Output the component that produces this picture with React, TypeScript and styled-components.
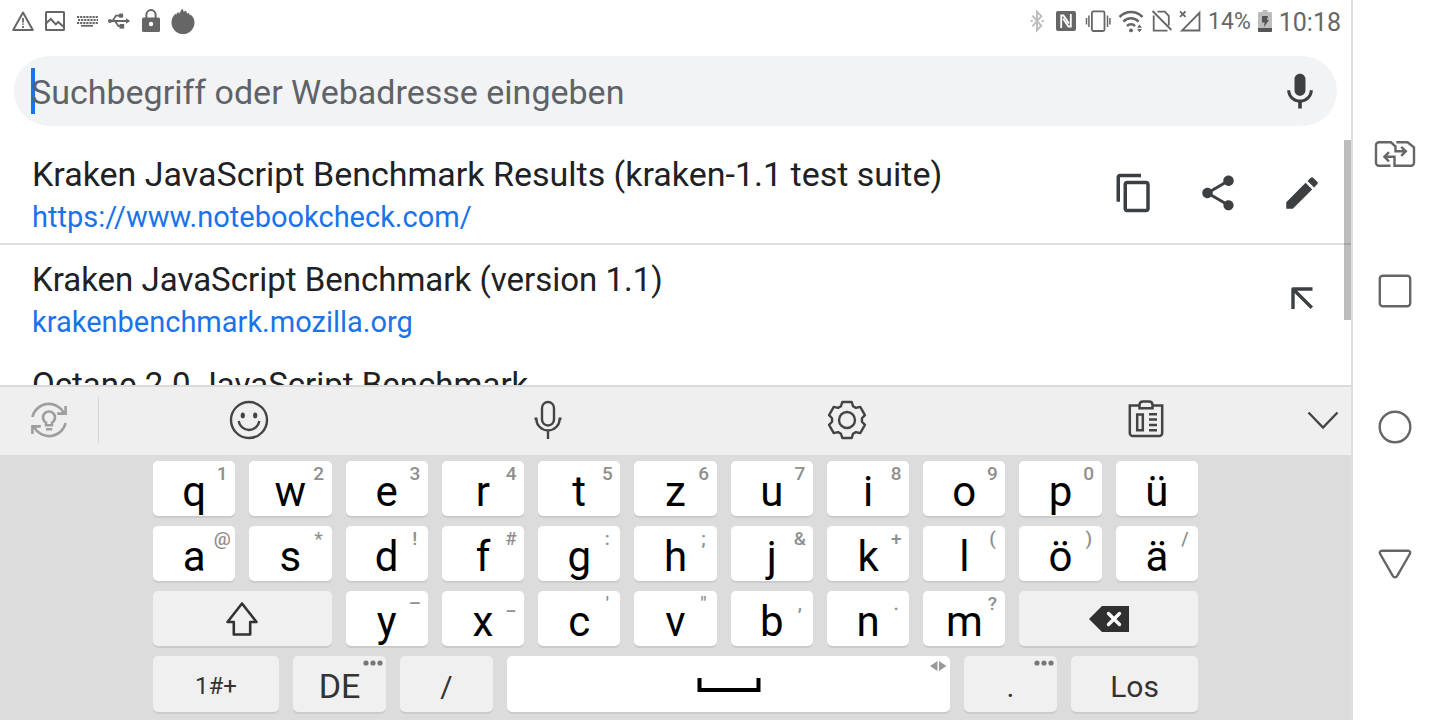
import React from 'react';
import styled, { createGlobalStyle } from 'styled-components';

const GlobalStyle = createGlobalStyle`
  *, *::before, *::after { box-sizing: border-box; }
  html, body { margin: 0; padding: 0; background: #fff; }
  body { font-family: Roboto, "Noto Sans", sans-serif; color: #202124; }
  button, input { font: inherit; color: inherit; }
`;

/* ---------- shell ---------- */

const Screen = styled.div`
  display: flex;
  height: 100vh;
  overflow: hidden;
`;

const Main = styled.main`
  flex: 1;
  min-width: 0;
  display: flex;
  flex-direction: column;
`;

const IconButton = styled.button`
  display: flex;
  align-items: center;
  justify-content: center;
  padding: 0;
  border: 0;
  background: none;
  cursor: pointer;
`;

/* ---------- status bar ---------- */

const StatusBar = styled.header`
  display: flex;
  align-items: center;
  justify-content: space-between;
  height: 42px;
  padding: 0 10px 0 11px;
  color: #666;
`;

const StatusGroup = styled.div<{ $gap?: number }>`
  display: flex;
  align-items: center;
  gap: ${(p) => p.$gap || 8}px;
`;

const StatusSvg = styled.svg`
  display: block;
  height: 24px;
  overflow: visible;
`;

const Percent = styled.span`
  padding-top: 2px;
  font-size: 23px;
  line-height: 26px;
`;

const Clock = styled.time`
  padding-top: 4px;
  font-size: 25px;
  line-height: 26px;
`;

/* ---------- search ---------- */

const SearchBar = styled.form`
  position: relative;
  display: flex;
  align-items: center;
  height: 70px;
  margin: 14px 14px 0;
  padding: 0 15px 0 17px;
  border-radius: 35px;
  background: #f1f3f4;
`;

const Caret = styled.span`
  position: absolute;
  left: 17px;
  top: 12px;
  width: 4px;
  height: 46px;
  background: #1a73e8;
`;

const SearchInput = styled.input`
  position: relative;
  flex: 1;
  min-width: 0;
  height: 46px;
  padding: 2px 0 0;
  border: 0;
  outline: 0;
  background: transparent;
  font-size: 34px;
  &::placeholder {
    color: #5f6368;
    opacity: 1;
  }
`;

const VoiceButton = styled(IconButton)`
  width: 44px;
  height: 46px;
  padding-top: 2px;
  color: #3c4043;
`;

/* ---------- suggestions ---------- */

const SuggestionArea = styled.section`
  position: relative;
  flex: 1;
  min-height: 0;
  margin-top: 14px;
  overflow: hidden;
`;

const SuggestionList = styled.ul`
  margin: 0;
  padding: 0;
  list-style: none;
`;

const Suggestion = styled.li<{ $divided?: boolean }>`
  display: flex;
  align-items: center;
  height: 105px;
  padding: 0 7px 0 32px;
  border-bottom: ${(p) => (p.$divided ? '2px solid #dfdfdf' : '0')};
`;

const SuggestionText = styled.div`
  flex: 1;
  min-width: 0;
  align-self: flex-start;
  padding-top: 14px;
  white-space: nowrap;
`;

const SuggestionTitle = styled.div<{ $large?: boolean }>`
  padding-bottom: ${(p) => (p.$large ? 2 : 0)}px;
  font-size: ${(p) => (p.$large ? 34 : 33)}px;
  line-height: ${(p) => (p.$large ? 40 : 42)}px;
`;

const SuggestionLink = styled.a`
  display: block;
  font-size: 29px;
  line-height: 42px;
  color: #1a73e8;
  text-decoration: none;
`;

const SuggestionAction = styled(IconButton)`
  width: 84px;
  height: 84px;
  padding-top: 2px;
  color: #3c4043;
`;

const ScrollThumb = styled.div`
  position: absolute;
  top: 0;
  right: 0;
  width: 7px;
  height: 180px;
  background: rgba(0, 0, 0, 0.26);
`;

/* ---------- keyboard ---------- */

const Keyboard = styled.section`
  border-top: 2px solid #dadada;
  background: #dcdcdc;
`;

const Toolbar = styled.div`
  display: flex;
  align-items: center;
  height: 68px;
  padding-bottom: 2px;
  background: #efefef;
  color: #444;
`;

const SuggestTool = styled(IconButton)`
  width: 99px;
  height: 46px;
  border-right: 1px solid #d4d4d4;
  color: #9e9e9e;
`;

const Tool = styled(IconButton)`
  flex: 1;
  height: 66px;
`;

const HideTool = styled(IconButton)`
  width: 56px;
  height: 66px;
`;

const KeyArea = styled.div`
  display: flex;
  flex-direction: column;
  gap: 10px;
  padding: 6px 153px 8px;
`;

const KeyRow = styled.div<{ $columns?: string }>`
  display: grid;
  grid-template-columns: ${(p) => p.$columns || 'repeat(11, minmax(0, 1fr))'};
  gap: 14px;
`;

const Key = styled.button<{ $special?: boolean; $wide?: boolean; $size?: number }>`
  position: relative;
  display: flex;
  align-items: center;
  justify-content: center;
  grid-column: span ${(p) => (p.$wide ? 2 : 1)};
  height: 55px;
  padding: ${(p) => (p.$special ? 0 : 6)}px 0 0;
  border: 0;
  border-radius: 5px;
  background: ${(p) => (p.$special ? '#f0f0f0' : '#fff')};
  box-shadow: 0 2px 0 #cbcbcb;
  color: ${(p) => (p.$special ? '#333' : '#000')};
  font-size: ${(p) => p.$size || 42}px;
  line-height: 49px;
  cursor: pointer;
`;

const BottomKey = styled(Key)`
  height: 56px;
  padding-top: 5px;
`;

const SpaceKey = styled(Key)`
  height: 56px;
  padding-top: 2px;
`;

const Hint = styled.span`
  position: absolute;
  top: 1px;
  right: 0;
  width: 26px;
  font-size: 19px;
  font-weight: 500;
  line-height: 23px;
  text-align: center;
  color: #8f8f8f;
`;

const CornerMark = styled.svg`
  position: absolute;
  top: 4px;
  right: 3px;
`;

/* ---------- system navigation ---------- */

const SystemNav = styled.nav`
  display: flex;
  flex-direction: column;
  width: 89px;
  padding: 86px 3px 88px 0;
  border-left: 2px solid #dfdfdf;
  color: #666;
`;

const NavButton = styled(IconButton)`
  flex: 1;
`;

/* ---------- icons ---------- */

const stroke = (width: number) => ({
  fill: 'none',
  stroke: 'currentColor',
  strokeWidth: width,
});

const LeftStatusIcons = () => (
  <StatusGroup>
    <StatusSvg width="24" viewBox="0 0 24 24" aria-hidden="true">
      <path d="M12 3.6 21.8 21H2.2Z" {...stroke(2)} strokeLinejoin="round" />
      <path d="M12 9v4.4M12 14.4v1.4M12 17v2" {...stroke(1.8)} />
    </StatusSvg>
    <StatusSvg width="24" viewBox="0 0 24 24" aria-hidden="true">
      <rect x="3" y="3" width="18" height="18" rx="0.6" {...stroke(2)} />
      <path d="M3 14.4 7.8 10l5 5.4 2.4-2.4 5.6 5" {...stroke(2)} />
    </StatusSvg>
    <StatusSvg width="24" viewBox="0 0 24 24" aria-hidden="true">
      <path d="M2 8H23M2 14H23" {...stroke(2.2)} strokeDasharray="2.2 0.9" />
      <path d="M3 11H23" {...stroke(2.2)} strokeDasharray="2.2 0.9" />
      <path d="M6 16.8H18" {...stroke(1.8)} />
    </StatusSvg>
    <StatusSvg width="24" viewBox="0 0 24 24" aria-hidden="true">
      <circle cx="3" cy="12" r="2" fill="currentColor" />
      <path d="M3 12H20M5.5 12 9 6.6h4M8 12l3.4 5.2H14" {...stroke(1.8)} />
      <path d="M19 9.2 23.2 12 19 14.8Z" fill="currentColor" />
      <rect x="11.8" y="4.4" width="4.4" height="4.4" rx="1.4" fill="currentColor" />
      <rect x="12.6" y="15" width="4.6" height="4.6" fill="currentColor" />
    </StatusSvg>
    <StatusSvg width="24" viewBox="0 0 24 24" aria-hidden="true">
      <path d="M7.4 9.5V5.6a4.6 4.6 0 0 1 9.2 0V9.5" {...stroke(2)} />
      <rect x="3" y="8.5" width="18" height="14.5" rx="1.5" fill="currentColor" />
      <circle cx="12" cy="15" r="2.2" fill="#fff" />
    </StatusSvg>
    <StatusSvg width="24" viewBox="0 0 24 24" aria-hidden="true">
      <path
        d="M.5 13.6C.5 10 2 7 4.6 4.600l.4 1.600C5.500 4.600 6.300 3.800 7.200 3l.9 1.700C9 3 10.200 1.800 11-.4c1 1 1.600 2.200 1.900 3.400L14.200 1.400c1.200 1 1.800 2.200 2.100 3.400l1.100-1c.9.8 1.400 1.700 1.600 2.600l.9-.6c2.300 2 3.600 4.700 3.600 7.800a11.500 11.500 0 0 1-23 0Z"
        fill="currentColor"
      />
    </StatusSvg>
  </StatusGroup>
);

const ConnectionIcons = () => (
  <StatusGroup>
    <StatusSvg width="16" viewBox="0 0 16 24" color="#bdbdbd" aria-hidden="true">
      <path d="M2.4 6.6 11.3 16.700 7 21.300V2.600l4.300 4.600L2.400 17.400" {...stroke(1.9)} />
      <path d="M.6 12h2.200M11.600 12h2.200" {...stroke(2)} />
    </StatusSvg>
    <StatusSvg width="24" viewBox="0 0 24 24" aria-hidden="true">
      <rect x="2" y="2" width="20" height="20" rx="2" fill="currentColor" />
      <path d="M7.200 19V6.500H9.500L15 14.500M16.800 5V17.500H14.500L9 9.500" fill="none" stroke="#fff" strokeWidth="1.800" />
    </StatusSvg>
    <StatusSvg width="24" viewBox="0 0 24 24" aria-hidden="true">
      <rect x="5.900" y="2.400" width="12.600" height="19.600" rx="1.500" {...stroke(1.8)} />
      <path d="M2.900 6.500v11.500M21.500 6.500v11.500M.5 9v6.500M23.900 9v6.500" {...stroke(1.5)} />
    </StatusSvg>
    <StatusSvg width="26" viewBox="0 0 26 24" aria-hidden="true">
      <path d="M1.500 8C8 1.400 18 1.400 24.500 8M5.400 12.600c4.200-4.400 11-4.400 15.200 0M9 17.200c2.200-2.500 5.800-2.500 8 0" {...stroke(2.5)} />
      <circle cx="13" cy="21.400" r="1.900" fill="currentColor" />
      <path d="M19 18.800 21.500 15.600 24 18.800ZM19 20 21.500 23.200 24 20Z" fill="currentColor" />
    </StatusSvg>
    <StatusSvg width="20" viewBox="0 0 20 24" aria-hidden="true">
      <path d="M1.700 6.500V21.600H15.500M5.500 2.700h7.300l4 4.200V16.500M.5 2 19.400 21" {...stroke(1.8)} />
    </StatusSvg>
    <StatusSvg width="20" viewBox="0 0 20 24" aria-hidden="true">
      <path d="M2 21.500H19.500V3.800ZM0 2.300l5.600 5.600M5.600 2.300 0 7.900" {...stroke(1.8)} />
    </StatusSvg>
  </StatusGroup>
);

const BatteryIcon = () => (
  <StatusSvg width="14" viewBox="0 0 14 24" aria-hidden="true">
    <path d="M4.500 1h5v2H13a1 1 0 0 1 1 1v15H0V4a1 1 0 0 1 1-1h3.500Z" fill="#bdbdbd" />
    <path d="M0 19h14v3a1 1 0 0 1-1 1H1a1 1 0 0 1-1-1Z" fill="#555" />
    <path d="M4 7h6L9 11h2L6 18l.6-4.500H4Z" fill="#555" />
  </StatusSvg>
);

const MicFilledIcon = () => (
  <svg width="44" height="44" viewBox="0 0 24 24" fill="currentColor" aria-hidden="true">
    <path d="M12 14c1.660 0 2.990-1.340 2.990-3L15 5c0-1.660-1.340-3-3-3S9 3.340 9 5v6c0 1.660 1.340 3 3 3zm5.300-3c0 3-2.540 5.100-5.300 5.100S6.700 14 6.700 11H5c0 3.410 2.720 6.230 6 6.720V21h2v-3.280c3.280-.48 6-3.300 6-6.720h-1.700z" />
  </svg>
);

const CopyIcon = () => (
  <svg width="42" height="42" viewBox="0 0 24 24" fill="currentColor" aria-hidden="true">
    <path d="M16 1H4c-1.100 0-2 .9-2 2v14h2V3h12V1zm3 4H8c-1.100 0-2 .9-2 2v14c0 1.100.9 2 2 2h11c1.100 0 2-.9 2-2V7c0-1.100-.9-2-2-2zm0 16H8V7h11v14z" />
  </svg>
);

const ShareIcon = () => (
  <svg width="42" height="42" viewBox="0 0 24 24" fill="currentColor" aria-hidden="true">
    <path d="M18 16.080c-.76 0-1.440.3-1.960.77L8.910 12.700c.05-.23.090-.46.090-.7s-.04-.47-.09-.7l7.050-4.110c.54.5 1.250.81 2.040.81 1.660 0 3-1.340 3-3s-1.340-3-3-3-3 1.340-3 3c0 .24.040.47.090.7L8.040 9.810C7.500 9.310 6.790 9 6 9c-1.660 0-3 1.340-3 3s1.340 3 3 3c.79 0 1.500-.31 2.040-.81l7.120 4.160c-.05.21-.08.43-.08.65 0 1.610 1.310 2.920 2.920 2.920s2.920-1.310 2.920-2.920-1.310-2.920-2.920-2.920z" />
  </svg>
);

const EditIcon = () => (
  <svg width="42" height="42" viewBox="0 0 24 24" fill="currentColor" aria-hidden="true">
    <path d="M3 17.250V21h3.750L17.810 9.940l-3.750-3.750L3 17.250zM20.710 7.040c.39-.39.39-1.020 0-1.410l-2.340-2.340c-.39-.39-1.020-.39-1.410 0l-1.830 1.830 3.750 3.750 1.830-1.830z" />
  </svg>
);

const InsertArrowIcon = () => (
  <svg width="24" height="24" viewBox="0 0 24 24" aria-hidden="true">
    <path d="M3 22V2H22.500M3 2 21.800 20.800" {...stroke(3.4)} strokeLinejoin="round" />
  </svg>
);

const SuggestIcon = () => (
  <svg width="40" height="40" viewBox="0 0 40 40" {...stroke(2.6)} aria-hidden="true">
    <path d="M3.400 17A17 17 0 0 1 35 13M36.600 6v7.600h-8.400" />
    <path d="M36.600 23A17 17 0 0 1 5 27M3.400 34v-7.600h8.400" />
    <path d="M17 25.300h6v-2.600c1.800-1.300 3-3 3-5.200a6 6 0 0 0-12 0c0 2.200 1.200 3.900 3 5.200ZM17 29.200h6.200" />
  </svg>
);

const SmileIcon = () => (
  <svg width="40" height="40" viewBox="0 0 40 40" aria-hidden="true">
    <circle cx="20" cy="20" r="18" {...stroke(2.4)} />
    <ellipse cx="13.800" cy="15.400" rx="2.100" ry="2.900" fill="currentColor" />
    <ellipse cx="26.200" cy="15.400" rx="2.100" ry="2.900" fill="currentColor" />
    <path d="M9.700 21a10.400 10.400 0 0 0 20.600 0" {...stroke(2.4)} />
  </svg>
);

const MicOutlineIcon = () => (
  <svg width="40" height="40" viewBox="0 0 40 40" {...stroke(2.4)} aria-hidden="true">
    <rect x="14" y="2" width="12" height="23.500" rx="6" />
    <path d="M6.500 18.700h3M33.500 18.700h-3M8.300 18.700c0 6.500 5.200 11.700 11.700 11.700s11.700-5.200 11.700-11.700M20 30.400V39" />
  </svg>
);

/* one tooth of the gear, repeated every 60 degrees round the centre */
const tooth = [[-6, -13.8], [-4.7, -18], [4.7, -18], [6, -13.8]];
const gearPoints = [0, 1, 2, 3, 4, 5]
  .flatMap((n) => {
    const a = (n * Math.PI) / 3;
    return tooth.map(
      ([x, y]) =>
        `${(20 + x * Math.cos(a) - y * Math.sin(a)).toFixed(2)},${(20 + x * Math.sin(a) + y * Math.cos(a)).toFixed(2)}`
    );
  })
  .join(' ');

const GearIcon = () => (
  <svg width="40" height="40" viewBox="0 0 40 40" {...stroke(2.4)} aria-hidden="true">
    <polygon points={gearPoints} strokeLinejoin="round" />
    <circle cx="20" cy="20" r="8" />
  </svg>
);

const ClipboardIcon = () => (
  <svg width="40" height="40" viewBox="0 0 40 40" {...stroke(2.5)} aria-hidden="true">
    <path d="M13.500 5.500H3.800V33a3 3 0 0 0 3 3h26.400a3 3 0 0 0 3-3V5.500h-9.700" />
    <path d="M13.500 8.300V5c0-2.200 1.300-3.500 3.500-3.500h6c2.200 0 3.500 1.300 3.500 3.500v3.300Z" />
    <path d="M11.200 14.400h5.600v15.800h-5.600ZM23 14.200h8M23 19.600h8M23 25h8M23 30.300h8" />
  </svg>
);

const ChevronIcon = () => (
  <svg width="32" height="20" viewBox="0 0 32 20" {...stroke(2.4)} aria-hidden="true">
    <path d="M1.500 2.500 16 17.500 30.500 2.500" />
  </svg>
);

const ShiftIcon = () => (
  <svg width="34" height="36" viewBox="0 0 34 36" {...stroke(2.6)} aria-hidden="true">
    <path d="M17 2.500 31.500 21h-6.300v12.500H8.800V21H2.500Z" strokeLinejoin="round" />
  </svg>
);

const BackspaceIcon = () => (
  <svg width="40" height="26" viewBox="0 0 40 26" aria-hidden="true">
    <path d="M0 13 13 0H40V26H13Z" fill="#303030" />
    <path d="M19.500 7.500 30.500 18.500M30.500 7.500 19.500 18.500" fill="none" stroke="#fff" strokeWidth="3.400" strokeLinecap="round" />
  </svg>
);

const SpaceIcon = () => (
  <svg width="64" height="14" viewBox="0 0 64 14" {...stroke(4)} aria-hidden="true">
    <path d="M2.500 0V12H61.500V0" />
  </svg>
);

const MoreMark = () => (
  <CornerMark width="20" height="6" viewBox="0 0 20 6" fill="#777" aria-hidden="true">
    <circle cx="3" cy="3" r="2.600" />
    <circle cx="10" cy="3" r="2.600" />
    <circle cx="17" cy="3" r="2.600" />
  </CornerMark>
);

const MoveMark = () => (
  <CornerMark width="18" height="12" viewBox="0 0 18 12" fill="#999" aria-hidden="true">
    <path d="M8.500 1V11L1 6ZM10 1V11L17.500 6Z" />
  </CornerMark>
);

const SwitchIcon = () => (
  <svg width="42" height="28" viewBox="0 0 42 28" {...stroke(2.4)} aria-hidden="true">
    <path d="M16.500 25.700H5a3 3 0 0 1-3-3V5.300a3 3 0 0 1 3-3h12l4.500 4.200v4.800H31.500M27.200 6.800l4.600 4.500-4.600 4.600" />
    <path d="M22.400 2.300H33.500l6.500 5v15.400a3 3 0 0 1-3 3H20.500V16.700H10.500M15 12.100l-4.600 4.600 4.600 4.600" />
  </svg>
);

const SquareIcon = () => (
  <svg width="34" height="34" viewBox="0 0 34 34" {...stroke(2.4)} aria-hidden="true">
    <rect x="1.800" y="1.800" width="30.400" height="30.400" rx="3" />
  </svg>
);

const CircleIcon = () => (
  <svg width="34" height="34" viewBox="0 0 34 34" {...stroke(2.4)} aria-hidden="true">
    <circle cx="17" cy="17" r="15.300" />
  </svg>
);

const TriangleIcon = () => (
  <svg width="34" height="30" viewBox="0 0 34 30" {...stroke(2.4)} aria-hidden="true">
    <path d="M4 1.800H30c2 0 2.800 1.600 1.800 3.200L19.200 26.800c-1.200 2-3.200 2-4.400 0L2.200 5C1.200 3.400 2 1.800 4 1.800Z" />
  </svg>
);

/* ---------- page ---------- */

type KeyDef = [letter: string, hint?: string];

const topRow: KeyDef[] = [
  ['q', '1'], ['w', '2'], ['e', '3'], ['r', '4'], ['t', '5'], ['z', '6'],
  ['u', '7'], ['i', '8'], ['o', '9'], ['p', '0'], ['ü'],
];
const homeRow: KeyDef[] = [
  ['a', '@'], ['s', '*'], ['d', '!'], ['f', '#'], ['g', ':'], ['h', ';'],
  ['j', '&'], ['k', '+'], ['l', '('], ['ö', ')'], ['ä', '/'],
];
const lowRow: KeyDef[] = [
  ['y', '–'], ['x', '_'], ['c', "'"], ['v', '"'], ['b', ','], ['n', '.'], ['m', '?'],
];

const LetterKeys = ({ keys }: { keys: KeyDef[] }) => (
  <>
    {keys.map(([letter, hint]) => (
      <Key key={letter} type="button">
        {letter}
        {hint && <Hint>{hint}</Hint>}
      </Key>
    ))}
  </>
);

export default function App() {
  return (
    <Screen>
      <GlobalStyle />
      <Main>
        <StatusBar>
          <LeftStatusIcons />
          <StatusGroup>
            <ConnectionIcons />
            <StatusGroup $gap={7}>
              <Percent>14%</Percent>
              <BatteryIcon />
              <Clock>10:18</Clock>
            </StatusGroup>
          </StatusGroup>
        </StatusBar>

        <SearchBar role="search" onSubmit={(e) => e.preventDefault()}>
          <Caret />
          <SearchInput
            type="text"
            aria-label="Suchbegriff oder Webadresse eingeben"
            placeholder="Suchbegriff oder Webadresse eingeben"
          />
          <VoiceButton type="button" aria-label="Sprachsuche"><MicFilledIcon /></VoiceButton>
        </SearchBar>

        <SuggestionArea>
          <SuggestionList>
            <Suggestion $divided>
              <SuggestionText>
                <SuggestionTitle $large>Kraken JavaScript Benchmark Results (kraken-1.1 test suite)</SuggestionTitle>
                <SuggestionLink href="https://www.notebookcheck.com/">https://www.notebookcheck.com/</SuggestionLink>
              </SuggestionText>
              <SuggestionAction type="button" aria-label="Kopieren"><CopyIcon /></SuggestionAction>
              <SuggestionAction type="button" aria-label="Teilen"><ShareIcon /></SuggestionAction>
              <SuggestionAction type="button" aria-label="Bearbeiten"><EditIcon /></SuggestionAction>
            </Suggestion>
            <Suggestion>
              <SuggestionText>
                <SuggestionTitle>Kraken JavaScript Benchmark (version 1.1)</SuggestionTitle>
                <SuggestionLink href="https://krakenbenchmark.mozilla.org">krakenbenchmark.mozilla.org</SuggestionLink>
              </SuggestionText>
              <SuggestionAction type="button" aria-label="Übernehmen"><InsertArrowIcon /></SuggestionAction>
            </Suggestion>
            <Suggestion>
              <SuggestionText>
                <SuggestionTitle>Octane 2.0 JavaScript Benchmark</SuggestionTitle>
              </SuggestionText>
            </Suggestion>
          </SuggestionList>
          <ScrollThumb />
        </SuggestionArea>

        <Keyboard aria-label="Tastatur">
          <Toolbar>
            <SuggestTool type="button" aria-label="Vorschläge"><SuggestIcon /></SuggestTool>
            <Tool type="button" aria-label="Emoji"><SmileIcon /></Tool>
            <Tool type="button" aria-label="Spracheingabe"><MicOutlineIcon /></Tool>
            <Tool type="button" aria-label="Einstellungen"><GearIcon /></Tool>
            <Tool type="button" aria-label="Zwischenablage"><ClipboardIcon /></Tool>
            <HideTool type="button" aria-label="Tastatur ausblenden"><ChevronIcon /></HideTool>
          </Toolbar>
          <KeyArea>
            <KeyRow><LetterKeys keys={topRow} /></KeyRow>
            <KeyRow><LetterKeys keys={homeRow} /></KeyRow>
            <KeyRow>
              <Key type="button" $special $wide aria-label="Umschalt"><ShiftIcon /></Key>
              <LetterKeys keys={lowRow} />
              <Key type="button" $special $wide aria-label="Löschen"><BackspaceIcon /></Key>
            </KeyRow>
            <KeyRow $columns="126fr 93fr 93fr 443fr 93fr 127fr">
              <BottomKey type="button" $special $size={24}>1#+</BottomKey>
              <BottomKey type="button" $special $size={34}>DE<MoreMark /></BottomKey>
              <BottomKey type="button" $special $size={30}>/</BottomKey>
              <SpaceKey type="button" aria-label="Leertaste"><SpaceIcon /><MoveMark /></SpaceKey>
              <BottomKey type="button" $special $size={30}>.<MoreMark /></BottomKey>
              <BottomKey type="button" $special $size={30}>Los</BottomKey>
            </KeyRow>
          </KeyArea>
        </Keyboard>
      </Main>

      <SystemNav aria-label="Systemnavigation">
        <NavButton type="button" aria-label="App wechseln"><SwitchIcon /></NavButton>
        <NavButton type="button" aria-label="Übersicht"><SquareIcon /></NavButton>
        <NavButton type="button" aria-label="Startbildschirm"><CircleIcon /></NavButton>
        <NavButton type="button" aria-label="Zurück"><TriangleIcon /></NavButton>
      </SystemNav>
    </Screen>
  );
}
